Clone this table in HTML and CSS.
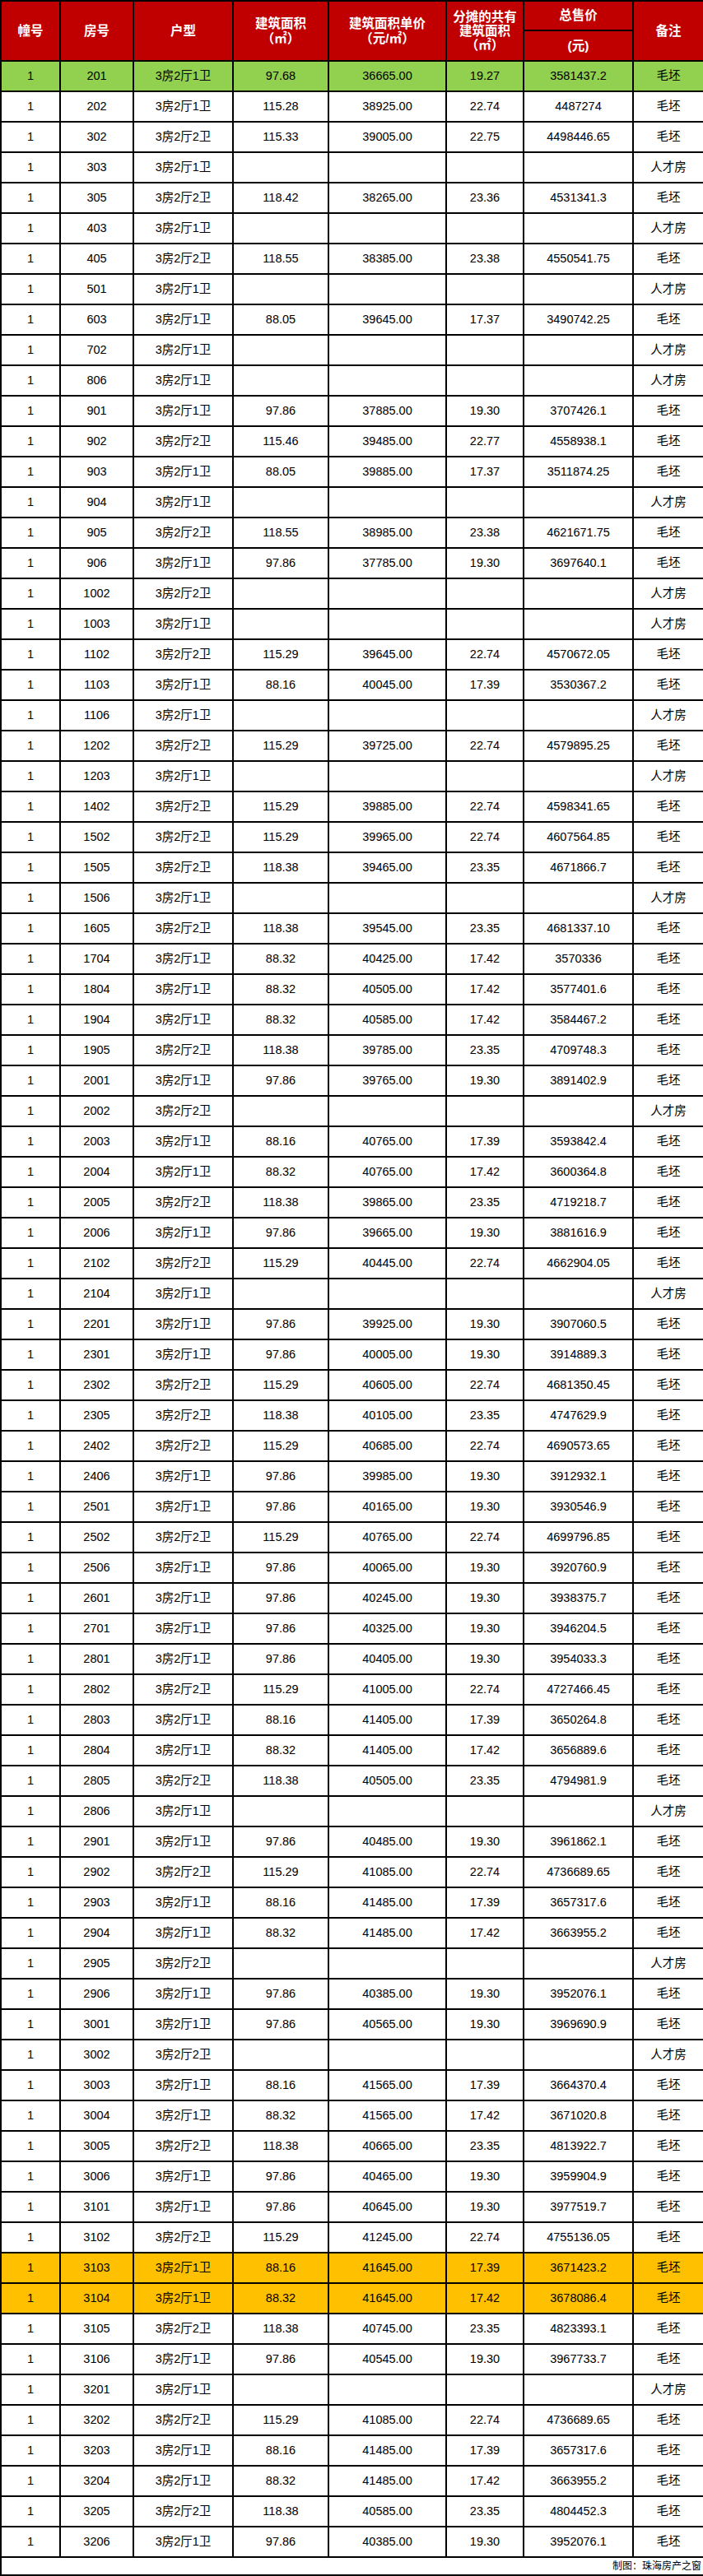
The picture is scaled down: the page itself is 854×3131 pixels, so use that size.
FILE: index.html
```html
<!DOCTYPE html>
<html lang="zh-CN">
<head>
<meta charset="utf-8">
<title>房源价格表</title>
<link rel="stylesheet" href="styles.css">
</head>
<body>
<table class="price-table">
<colgroup>
<col class="c1"><col class="c2"><col class="c3"><col class="c4"><col class="c5"><col class="c6"><col class="c7"><col class="c8">
</colgroup>
<thead>
<tr class="head-top">
<th rowspan="2">幢号</th>
<th rowspan="2">房号</th>
<th rowspan="2">户型</th>
<th rowspan="2">建筑面积<br>（㎡）</th>
<th rowspan="2">建筑面积单价<br>（元/㎡）</th>
<th rowspan="2" class="tight">分摊的共有<br>建筑面积<br>（㎡）</th>
<th>总售价</th>
<th rowspan="2">备注</th>
</tr>
<tr class="head-bottom">
<th>(元)</th>
</tr>
</thead>
<tbody>
<tr class="green"><td>1</td><td>201</td><td>3房2厅1卫</td><td>97.68</td><td>36665.00</td><td>19.27</td><td>3581437.2</td><td>毛坯</td></tr>
<tr><td>1</td><td>202</td><td>3房2厅1卫</td><td>115.28</td><td>38925.00</td><td>22.74</td><td>4487274</td><td>毛坯</td></tr>
<tr><td>1</td><td>302</td><td>3房2厅2卫</td><td>115.33</td><td>39005.00</td><td>22.75</td><td>4498446.65</td><td>毛坯</td></tr>
<tr><td>1</td><td>303</td><td>3房2厅1卫</td><td></td><td></td><td></td><td></td><td>人才房</td></tr>
<tr><td>1</td><td>305</td><td>3房2厅2卫</td><td>118.42</td><td>38265.00</td><td>23.36</td><td>4531341.3</td><td>毛坯</td></tr>
<tr><td>1</td><td>403</td><td>3房2厅1卫</td><td></td><td></td><td></td><td></td><td>人才房</td></tr>
<tr><td>1</td><td>405</td><td>3房2厅2卫</td><td>118.55</td><td>38385.00</td><td>23.38</td><td>4550541.75</td><td>毛坯</td></tr>
<tr><td>1</td><td>501</td><td>3房2厅1卫</td><td></td><td></td><td></td><td></td><td>人才房</td></tr>
<tr><td>1</td><td>603</td><td>3房2厅1卫</td><td>88.05</td><td>39645.00</td><td>17.37</td><td>3490742.25</td><td>毛坯</td></tr>
<tr><td>1</td><td>702</td><td>3房2厅1卫</td><td></td><td></td><td></td><td></td><td>人才房</td></tr>
<tr><td>1</td><td>806</td><td>3房2厅1卫</td><td></td><td></td><td></td><td></td><td>人才房</td></tr>
<tr><td>1</td><td>901</td><td>3房2厅1卫</td><td>97.86</td><td>37885.00</td><td>19.30</td><td>3707426.1</td><td>毛坯</td></tr>
<tr><td>1</td><td>902</td><td>3房2厅2卫</td><td>115.46</td><td>39485.00</td><td>22.77</td><td>4558938.1</td><td>毛坯</td></tr>
<tr><td>1</td><td>903</td><td>3房2厅1卫</td><td>88.05</td><td>39885.00</td><td>17.37</td><td>3511874.25</td><td>毛坯</td></tr>
<tr><td>1</td><td>904</td><td>3房2厅1卫</td><td></td><td></td><td></td><td></td><td>人才房</td></tr>
<tr><td>1</td><td>905</td><td>3房2厅2卫</td><td>118.55</td><td>38985.00</td><td>23.38</td><td>4621671.75</td><td>毛坯</td></tr>
<tr><td>1</td><td>906</td><td>3房2厅1卫</td><td>97.86</td><td>37785.00</td><td>19.30</td><td>3697640.1</td><td>毛坯</td></tr>
<tr><td>1</td><td>1002</td><td>3房2厅2卫</td><td></td><td></td><td></td><td></td><td>人才房</td></tr>
<tr><td>1</td><td>1003</td><td>3房2厅1卫</td><td></td><td></td><td></td><td></td><td>人才房</td></tr>
<tr><td>1</td><td>1102</td><td>3房2厅2卫</td><td>115.29</td><td>39645.00</td><td>22.74</td><td>4570672.05</td><td>毛坯</td></tr>
<tr><td>1</td><td>1103</td><td>3房2厅1卫</td><td>88.16</td><td>40045.00</td><td>17.39</td><td>3530367.2</td><td>毛坯</td></tr>
<tr><td>1</td><td>1106</td><td>3房2厅1卫</td><td></td><td></td><td></td><td></td><td>人才房</td></tr>
<tr><td>1</td><td>1202</td><td>3房2厅2卫</td><td>115.29</td><td>39725.00</td><td>22.74</td><td>4579895.25</td><td>毛坯</td></tr>
<tr><td>1</td><td>1203</td><td>3房2厅1卫</td><td></td><td></td><td></td><td></td><td>人才房</td></tr>
<tr><td>1</td><td>1402</td><td>3房2厅2卫</td><td>115.29</td><td>39885.00</td><td>22.74</td><td>4598341.65</td><td>毛坯</td></tr>
<tr><td>1</td><td>1502</td><td>3房2厅2卫</td><td>115.29</td><td>39965.00</td><td>22.74</td><td>4607564.85</td><td>毛坯</td></tr>
<tr><td>1</td><td>1505</td><td>3房2厅2卫</td><td>118.38</td><td>39465.00</td><td>23.35</td><td>4671866.7</td><td>毛坯</td></tr>
<tr><td>1</td><td>1506</td><td>3房2厅1卫</td><td></td><td></td><td></td><td></td><td>人才房</td></tr>
<tr><td>1</td><td>1605</td><td>3房2厅2卫</td><td>118.38</td><td>39545.00</td><td>23.35</td><td>4681337.10</td><td>毛坯</td></tr>
<tr><td>1</td><td>1704</td><td>3房2厅1卫</td><td>88.32</td><td>40425.00</td><td>17.42</td><td>3570336</td><td>毛坯</td></tr>
<tr><td>1</td><td>1804</td><td>3房2厅1卫</td><td>88.32</td><td>40505.00</td><td>17.42</td><td>3577401.6</td><td>毛坯</td></tr>
<tr><td>1</td><td>1904</td><td>3房2厅1卫</td><td>88.32</td><td>40585.00</td><td>17.42</td><td>3584467.2</td><td>毛坯</td></tr>
<tr><td>1</td><td>1905</td><td>3房2厅2卫</td><td>118.38</td><td>39785.00</td><td>23.35</td><td>4709748.3</td><td>毛坯</td></tr>
<tr><td>1</td><td>2001</td><td>3房2厅1卫</td><td>97.86</td><td>39765.00</td><td>19.30</td><td>3891402.9</td><td>毛坯</td></tr>
<tr><td>1</td><td>2002</td><td>3房2厅2卫</td><td></td><td></td><td></td><td></td><td>人才房</td></tr>
<tr><td>1</td><td>2003</td><td>3房2厅1卫</td><td>88.16</td><td>40765.00</td><td>17.39</td><td>3593842.4</td><td>毛坯</td></tr>
<tr><td>1</td><td>2004</td><td>3房2厅1卫</td><td>88.32</td><td>40765.00</td><td>17.42</td><td>3600364.8</td><td>毛坯</td></tr>
<tr><td>1</td><td>2005</td><td>3房2厅2卫</td><td>118.38</td><td>39865.00</td><td>23.35</td><td>4719218.7</td><td>毛坯</td></tr>
<tr><td>1</td><td>2006</td><td>3房2厅1卫</td><td>97.86</td><td>39665.00</td><td>19.30</td><td>3881616.9</td><td>毛坯</td></tr>
<tr><td>1</td><td>2102</td><td>3房2厅2卫</td><td>115.29</td><td>40445.00</td><td>22.74</td><td>4662904.05</td><td>毛坯</td></tr>
<tr><td>1</td><td>2104</td><td>3房2厅1卫</td><td></td><td></td><td></td><td></td><td>人才房</td></tr>
<tr><td>1</td><td>2201</td><td>3房2厅1卫</td><td>97.86</td><td>39925.00</td><td>19.30</td><td>3907060.5</td><td>毛坯</td></tr>
<tr><td>1</td><td>2301</td><td>3房2厅1卫</td><td>97.86</td><td>40005.00</td><td>19.30</td><td>3914889.3</td><td>毛坯</td></tr>
<tr><td>1</td><td>2302</td><td>3房2厅2卫</td><td>115.29</td><td>40605.00</td><td>22.74</td><td>4681350.45</td><td>毛坯</td></tr>
<tr><td>1</td><td>2305</td><td>3房2厅2卫</td><td>118.38</td><td>40105.00</td><td>23.35</td><td>4747629.9</td><td>毛坯</td></tr>
<tr><td>1</td><td>2402</td><td>3房2厅2卫</td><td>115.29</td><td>40685.00</td><td>22.74</td><td>4690573.65</td><td>毛坯</td></tr>
<tr><td>1</td><td>2406</td><td>3房2厅1卫</td><td>97.86</td><td>39985.00</td><td>19.30</td><td>3912932.1</td><td>毛坯</td></tr>
<tr><td>1</td><td>2501</td><td>3房2厅1卫</td><td>97.86</td><td>40165.00</td><td>19.30</td><td>3930546.9</td><td>毛坯</td></tr>
<tr><td>1</td><td>2502</td><td>3房2厅2卫</td><td>115.29</td><td>40765.00</td><td>22.74</td><td>4699796.85</td><td>毛坯</td></tr>
<tr><td>1</td><td>2506</td><td>3房2厅1卫</td><td>97.86</td><td>40065.00</td><td>19.30</td><td>3920760.9</td><td>毛坯</td></tr>
<tr><td>1</td><td>2601</td><td>3房2厅1卫</td><td>97.86</td><td>40245.00</td><td>19.30</td><td>3938375.7</td><td>毛坯</td></tr>
<tr><td>1</td><td>2701</td><td>3房2厅1卫</td><td>97.86</td><td>40325.00</td><td>19.30</td><td>3946204.5</td><td>毛坯</td></tr>
<tr><td>1</td><td>2801</td><td>3房2厅1卫</td><td>97.86</td><td>40405.00</td><td>19.30</td><td>3954033.3</td><td>毛坯</td></tr>
<tr><td>1</td><td>2802</td><td>3房2厅2卫</td><td>115.29</td><td>41005.00</td><td>22.74</td><td>4727466.45</td><td>毛坯</td></tr>
<tr><td>1</td><td>2803</td><td>3房2厅1卫</td><td>88.16</td><td>41405.00</td><td>17.39</td><td>3650264.8</td><td>毛坯</td></tr>
<tr><td>1</td><td>2804</td><td>3房2厅1卫</td><td>88.32</td><td>41405.00</td><td>17.42</td><td>3656889.6</td><td>毛坯</td></tr>
<tr><td>1</td><td>2805</td><td>3房2厅2卫</td><td>118.38</td><td>40505.00</td><td>23.35</td><td>4794981.9</td><td>毛坯</td></tr>
<tr><td>1</td><td>2806</td><td>3房2厅1卫</td><td></td><td></td><td></td><td></td><td>人才房</td></tr>
<tr><td>1</td><td>2901</td><td>3房2厅1卫</td><td>97.86</td><td>40485.00</td><td>19.30</td><td>3961862.1</td><td>毛坯</td></tr>
<tr><td>1</td><td>2902</td><td>3房2厅2卫</td><td>115.29</td><td>41085.00</td><td>22.74</td><td>4736689.65</td><td>毛坯</td></tr>
<tr><td>1</td><td>2903</td><td>3房2厅1卫</td><td>88.16</td><td>41485.00</td><td>17.39</td><td>3657317.6</td><td>毛坯</td></tr>
<tr><td>1</td><td>2904</td><td>3房2厅1卫</td><td>88.32</td><td>41485.00</td><td>17.42</td><td>3663955.2</td><td>毛坯</td></tr>
<tr><td>1</td><td>2905</td><td>3房2厅2卫</td><td></td><td></td><td></td><td></td><td>人才房</td></tr>
<tr><td>1</td><td>2906</td><td>3房2厅1卫</td><td>97.86</td><td>40385.00</td><td>19.30</td><td>3952076.1</td><td>毛坯</td></tr>
<tr><td>1</td><td>3001</td><td>3房2厅1卫</td><td>97.86</td><td>40565.00</td><td>19.30</td><td>3969690.9</td><td>毛坯</td></tr>
<tr><td>1</td><td>3002</td><td>3房2厅2卫</td><td></td><td></td><td></td><td></td><td>人才房</td></tr>
<tr><td>1</td><td>3003</td><td>3房2厅1卫</td><td>88.16</td><td>41565.00</td><td>17.39</td><td>3664370.4</td><td>毛坯</td></tr>
<tr><td>1</td><td>3004</td><td>3房2厅1卫</td><td>88.32</td><td>41565.00</td><td>17.42</td><td>3671020.8</td><td>毛坯</td></tr>
<tr><td>1</td><td>3005</td><td>3房2厅2卫</td><td>118.38</td><td>40665.00</td><td>23.35</td><td>4813922.7</td><td>毛坯</td></tr>
<tr><td>1</td><td>3006</td><td>3房2厅1卫</td><td>97.86</td><td>40465.00</td><td>19.30</td><td>3959904.9</td><td>毛坯</td></tr>
<tr><td>1</td><td>3101</td><td>3房2厅1卫</td><td>97.86</td><td>40645.00</td><td>19.30</td><td>3977519.7</td><td>毛坯</td></tr>
<tr><td>1</td><td>3102</td><td>3房2厅2卫</td><td>115.29</td><td>41245.00</td><td>22.74</td><td>4755136.05</td><td>毛坯</td></tr>
<tr class="yellow"><td>1</td><td>3103</td><td>3房2厅1卫</td><td>88.16</td><td>41645.00</td><td>17.39</td><td>3671423.2</td><td>毛坯</td></tr>
<tr class="yellow"><td>1</td><td>3104</td><td>3房2厅1卫</td><td>88.32</td><td>41645.00</td><td>17.42</td><td>3678086.4</td><td>毛坯</td></tr>
<tr><td>1</td><td>3105</td><td>3房2厅2卫</td><td>118.38</td><td>40745.00</td><td>23.35</td><td>4823393.1</td><td>毛坯</td></tr>
<tr><td>1</td><td>3106</td><td>3房2厅1卫</td><td>97.86</td><td>40545.00</td><td>19.30</td><td>3967733.7</td><td>毛坯</td></tr>
<tr><td>1</td><td>3201</td><td>3房2厅1卫</td><td></td><td></td><td></td><td></td><td>人才房</td></tr>
<tr><td>1</td><td>3202</td><td>3房2厅2卫</td><td>115.29</td><td>41085.00</td><td>22.74</td><td>4736689.65</td><td>毛坯</td></tr>
<tr><td>1</td><td>3203</td><td>3房2厅1卫</td><td>88.16</td><td>41485.00</td><td>17.39</td><td>3657317.6</td><td>毛坯</td></tr>
<tr><td>1</td><td>3204</td><td>3房2厅1卫</td><td>88.32</td><td>41485.00</td><td>17.42</td><td>3663955.2</td><td>毛坯</td></tr>
<tr><td>1</td><td>3205</td><td>3房2厅2卫</td><td>118.38</td><td>40585.00</td><td>23.35</td><td>4804452.3</td><td>毛坯</td></tr>
<tr><td>1</td><td>3206</td><td>3房2厅1卫</td><td>97.86</td><td>40385.00</td><td>19.30</td><td>3952076.1</td><td>毛坯</td></tr>
</tbody>
<tfoot>
<tr class="credit"><td colspan="8">制图：珠海房产之窗</td></tr>
</tfoot>
</table>
</body>
</html>
```

FILE: styles.css
```css
html, body {
  margin: 0;
  padding: 0;
  background: #ffffff;
}

.price-table {
  width: 854px;
  table-layout: fixed;
  border-collapse: collapse;
  font-family: "Liberation Sans", Arial, "Noto Sans CJK SC", sans-serif;
  color: #000;
}

.c1 { width: 72px; }
.c2 { width: 89px; }
.c3 { width: 121px; }
.c4 { width: 116px; }
.c5 { width: 143px; }
.c6 { width: 94px; }
.c7 { width: 133px; }
.c8 { width: 86px; }

.price-table th,
.price-table td {
  border: 2px solid #000;
  padding: 0;
  text-align: center;
  vertical-align: middle;
  overflow: hidden;
  white-space: nowrap;
}

.price-table th {
  background: #c00000;
  color: #fff;
  font-weight: bold;
  font-size: 15.5px;
  line-height: 18px;
}

.price-table th.tight {
  line-height: 17px;
}

.head-top { height: 36px; }
.head-bottom { height: 37px; }

.price-table tbody tr { height: 37px; }

.price-table td {
  font-size: 14.5px;
  line-height: 17px;
}

.green td { background: #92d050; }
.yellow td { background: #ffc000; }

.credit { height: 22px; }
.credit td {
  text-align: right;
  font-size: 12px;
  line-height: 14px;
  padding-right: 2px;
}
```
